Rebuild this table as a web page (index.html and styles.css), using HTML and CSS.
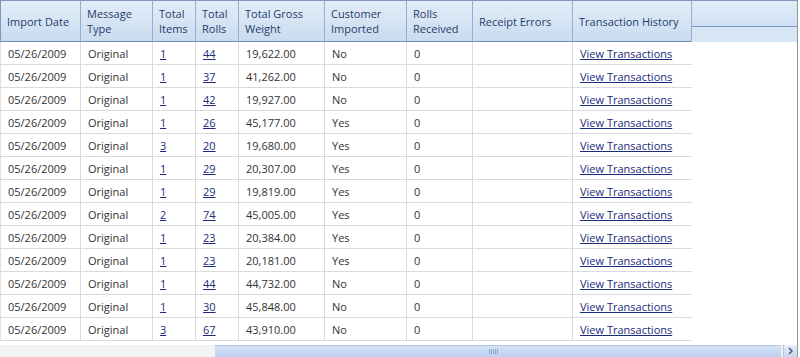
FILE: index.html
```html
<!DOCTYPE html>
<html>
<head>
<meta charset="utf-8">
<link rel="stylesheet" href="styles.css">
</head>
<body>
<div class="grid">
  <table class="data">
    <colgroup>
      <col class="c1"><col class="c2"><col class="c3"><col class="c4"><col class="c5"><col class="c6"><col class="c7"><col class="c8"><col class="c9"><col class="cf">
    </colgroup>
    <thead>
      <tr>
        <th>Import Date</th>
        <th>Message<br>Type</th>
        <th>Total<br>Items</th>
        <th>Total<br>Rolls</th>
        <th>Total Gross<br>Weight</th>
        <th>Customer<br>Imported</th>
        <th>Rolls<br>Received</th>
        <th>Receipt Errors</th>
        <th>Transaction History</th>
        <th class="filler"><div class="filler-top"></div></th>
      </tr>
    </thead>
    <tbody>
      <tr><td>05/26/2009</td><td>Original</td><td><a href="#">1</a></td><td><a href="#">44</a></td><td>19,622.00</td><td>No</td><td>0</td><td></td><td class="last"><a href="#">View Transactions</a></td><td class="fill"></td></tr>
      <tr><td>05/26/2009</td><td>Original</td><td><a href="#">1</a></td><td><a href="#">37</a></td><td>41,262.00</td><td>No</td><td>0</td><td></td><td class="last"><a href="#">View Transactions</a></td><td class="fill"></td></tr>
      <tr><td>05/26/2009</td><td>Original</td><td><a href="#">1</a></td><td><a href="#">42</a></td><td>19,927.00</td><td>No</td><td>0</td><td></td><td class="last"><a href="#">View Transactions</a></td><td class="fill"></td></tr>
      <tr><td>05/26/2009</td><td>Original</td><td><a href="#">1</a></td><td><a href="#">26</a></td><td>45,177.00</td><td>Yes</td><td>0</td><td></td><td class="last"><a href="#">View Transactions</a></td><td class="fill"></td></tr>
      <tr><td>05/26/2009</td><td>Original</td><td><a href="#">3</a></td><td><a href="#">20</a></td><td>19,680.00</td><td>Yes</td><td>0</td><td></td><td class="last"><a href="#">View Transactions</a></td><td class="fill"></td></tr>
      <tr><td>05/26/2009</td><td>Original</td><td><a href="#">1</a></td><td><a href="#">29</a></td><td>20,307.00</td><td>Yes</td><td>0</td><td></td><td class="last"><a href="#">View Transactions</a></td><td class="fill"></td></tr>
      <tr><td>05/26/2009</td><td>Original</td><td><a href="#">1</a></td><td><a href="#">29</a></td><td>19,819.00</td><td>Yes</td><td>0</td><td></td><td class="last"><a href="#">View Transactions</a></td><td class="fill"></td></tr>
      <tr><td>05/26/2009</td><td>Original</td><td><a href="#">2</a></td><td><a href="#">74</a></td><td>45,005.00</td><td>Yes</td><td>0</td><td></td><td class="last"><a href="#">View Transactions</a></td><td class="fill"></td></tr>
      <tr><td>05/26/2009</td><td>Original</td><td><a href="#">1</a></td><td><a href="#">23</a></td><td>20,384.00</td><td>Yes</td><td>0</td><td></td><td class="last"><a href="#">View Transactions</a></td><td class="fill"></td></tr>
      <tr><td>05/26/2009</td><td>Original</td><td><a href="#">1</a></td><td><a href="#">23</a></td><td>20,181.00</td><td>Yes</td><td>0</td><td></td><td class="last"><a href="#">View Transactions</a></td><td class="fill"></td></tr>
      <tr><td>05/26/2009</td><td>Original</td><td><a href="#">1</a></td><td><a href="#">44</a></td><td>44,732.00</td><td>No</td><td>0</td><td></td><td class="last"><a href="#">View Transactions</a></td><td class="fill"></td></tr>
      <tr><td>05/26/2009</td><td>Original</td><td><a href="#">1</a></td><td><a href="#">30</a></td><td>45,848.00</td><td>No</td><td>0</td><td></td><td class="last"><a href="#">View Transactions</a></td><td class="fill"></td></tr>
      <tr><td>05/26/2009</td><td>Original</td><td><a href="#">3</a></td><td><a href="#">67</a></td><td>43,910.00</td><td>No</td><td>0</td><td></td><td class="last"><a href="#">View Transactions</a></td><td class="fill"></td></tr>
    </tbody>
  </table>
  <div class="hscroll">
    <div class="track-left"></div>
    <div class="thumb"><span class="grip"></span></div>
    <div class="arrow">
      <svg width="7" height="8" viewBox="0 0 7 8"><path d="M2 1 L5 4 L2 7" fill="none" stroke="#4d6185" stroke-width="1.6"/></svg>
    </div>
  </div>
</div>
</body>
</html>
```
FILE: styles.css
```css
html, body {
  margin: 0;
  padding: 0;
  background: #ffffff;
}
body {
  font-family: "Open Sans", "Noto Sans", sans-serif;
  font-size: 11px;
  color: #333333;
}
.grid {
  width: 797px;
  height: 357px;
  border-right: 1px solid #8a98a8;
  box-sizing: content-box;
  display: flex;
  flex-direction: column;
  overflow: hidden;
}
.data {
  border-collapse: separate;
  border-spacing: 0;
  table-layout: fixed;
  width: 797px;
}
.c1 { width: 81px; }
.c2 { width: 72px; }
.c3 { width: 43px; }
.c4 { width: 43px; }
.c5 { width: 86px; }
.c6 { width: 82px; }
.c7 { width: 66px; }
.c8 { width: 100px; }
.c9 { width: 119px; }
.cf { width: auto; }
.data th {
  height: 42px;
  padding: 0 6px;
  box-sizing: border-box;
  text-align: left;
  vertical-align: middle;
  font-weight: normal;
  color: #1f3d6a;
  line-height: 15px;
  background: linear-gradient(#e3edf8, #c9dbf0);
  border-right: 1px solid #94aed2;
  border-top: 1px solid #7f97b8;
  border-bottom: 1px solid #6f8db5;
}
.data th:first-child {
  border-left: 1px solid #7f97b8;
}
.data th.filler {
  padding: 0;
  vertical-align: top;
  border-bottom: none;
  border-right: none;
  background: #d7e5f5;
}
.filler-top {
  height: 25px;
  border-bottom: 1px solid #7c99c2;
  background: linear-gradient(#e3edf8, #cfdff2);
}
.data td {
  height: 23px;
  padding: 0 7px;
  box-sizing: border-box;
  border-right: 1px solid #dadada;
  border-bottom: 1px solid #dadada;
  white-space: nowrap;
  overflow: hidden;
  color: #333333;
}
.data td:first-child {
  border-left: 1px solid #e2e2e2;
}
.data td.last {
  border-right: none;
}
.data td.fill {
  border: none;
}
.data a {
  color: #1a2b7c;
  text-decoration: underline;
}
.hscroll {
  margin-top: 4px;
  height: 12px;
  display: flex;
  background: #f1f1ef;
}
.track-left {
  width: 215px;
  background: #f3f3f1;
}
.thumb {
  flex: 1;
  background: linear-gradient(#d4e2f8, #bcd0f0);
  border-top: 1px solid #b2c6e6;
  display: flex;
  align-items: center;
  justify-content: center;
  box-sizing: border-box;
  margin-right: 2px;
}
.grip {
  width: 9px;
  height: 5px;
  background: repeating-linear-gradient(90deg, #8fa7cc 0 1px, transparent 1px 2px);
  margin-left: -10px;
}
.arrow {
  width: 13px;
  background: linear-gradient(#e6eefa, #c9d8ef);
  border-left: 1px solid #b6c6df;
  display: flex;
  align-items: center;
  justify-content: center;
}
```
